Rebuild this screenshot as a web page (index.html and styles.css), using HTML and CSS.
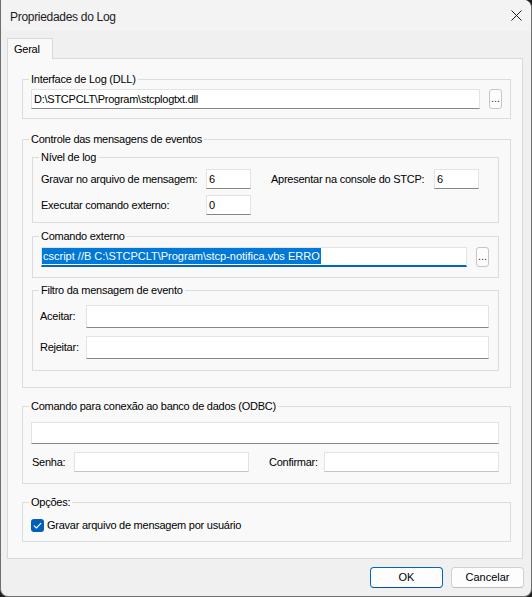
FILE: index.html
```html
<!DOCTYPE html>
<html lang="pt">
<head>
<meta charset="utf-8">
<title>Propriedades do Log</title>
<link rel="stylesheet" href="styles.css">
</head>
<body>
<div class="window">
  <div class="titlebar">
    <span class="title">Propriedades do Log</span>
    <svg class="close" width="11" height="11" viewBox="0 0 11 11"><path d="M0.5 0.5 L10.5 10.5 M10.5 0.5 L0.5 10.5" stroke="#1a1a1a" stroke-width="1" fill="none"/></svg>
  </div>
  <div class="client">
    <div class="tabs"><div class="tab">Geral</div></div>
    <div class="panel">
      <fieldset class="group g-dll">
        <legend>Interface de Log (DLL)</legend>
        <div class="browse-row dll-row">
          <div class="field">D:\STCPCLT\Program\stcplogtxt.dll</div>
          <div class="dots">...</div>
        </div>
      </fieldset>

      <fieldset class="group g-ctrl">
        <legend>Controle das mensagens de eventos</legend>
        <div class="ctrl-body">
          <fieldset class="group g-level">
            <legend>Nível de log</legend>
            <div class="level-grid">
              <span class="lbl">Gravar no arquivo de mensagem:</span>
              <div class="field">6</div>
              <span class="lbl lbl2">Apresentar na console do STCP:</span>
              <div class="field">6</div>
              <span class="lbl">Executar comando externo:</span>
              <div class="field">0</div>
            </div>
          </fieldset>

          <fieldset class="group g-cmd">
            <legend>Comando externo</legend>
            <div class="browse-row cmd-row">
              <div class="field focused"><span class="sel">cscript //B C:\STCPCLT\Program\stcp-notifica.vbs ERRO</span></div>
              <div class="dots">...</div>
            </div>
          </fieldset>

          <fieldset class="group g-filter">
            <legend>Filtro da mensagem de evento</legend>
            <div class="filter-grid">
              <span class="lbl">Aceitar:</span>
              <div class="field tall"></div>
              <span class="lbl">Rejeitar:</span>
              <div class="field tall"></div>
            </div>
          </fieldset>
        </div>
      </fieldset>

      <fieldset class="group g-odbc">
        <legend>Comando para conexão ao banco de dados (ODBC)</legend>
        <div class="odbc-body">
          <div class="field h22"></div>
          <div class="pw-row">
            <span class="lbl senha">Senha:</span>
            <div class="field pw"></div>
            <span class="lbl confirm">Confirmar:</span>
            <div class="field pw"></div>
          </div>
        </div>
      </fieldset>

      <fieldset class="group g-opt">
        <legend>Opções:</legend>
        <div class="check-row">
          <span class="checkbox"><svg width="13" height="13" viewBox="0 0 13 13"><path d="M3.2 6.8 L5.4 9 L9.8 4.4" stroke="#ffffff" stroke-width="1.1" fill="none" stroke-linecap="round" stroke-linejoin="round"/></svg></span>
          <span class="check-label">Gravar arquivo de mensagem por usuário</span>
        </div>
      </fieldset>
    </div>
    <div class="footer">
      <div class="btn default">OK</div>
      <div class="btn">Cancelar</div>
    </div>
  </div>
</div>
</body>
</html>
```

FILE: styles.css
```css
* { box-sizing: border-box; }
html, body { margin: 0; padding: 0; }
body {
  background: #1e1e1e;
  font-family: "Liberation Sans", Arial, sans-serif;
  font-size: 11px;
  color: #000;
  letter-spacing: -0.25px;
}
.window {
  width: 532px;
  height: 597px;
  background: #f0f0f0;
  border: 1px solid #6f6f6f;
  border-top: none;
  border-radius: 0 8px 8px 8px;
  overflow: hidden;
  display: flex;
  flex-direction: column;
}
.titlebar {
  height: 31px;
  flex: none;
  background: #f3f3f3;
  display: flex;
  align-items: center;
  justify-content: space-between;
  padding: 0 9px 0 9px;
}
.title {
  font-size: 12px;
  letter-spacing: -0.3px;
  color: #1b1b1b;
  margin-top: 2px;
}
.close { display: block; }
.client {
  flex: 1;
  padding: 7px 7px 0 6px;
  display: flex;
  flex-direction: column;
}
.tabs { display: flex; height: 20px; flex: none; }
.tab {
  position: relative;
  z-index: 1;
  width: 46px;
  height: 21px;
  background: #f9f9f9;
  border: 1px solid #d9d9d9;
  border-bottom: none;
  padding: 4px 0 0 6px;
  line-height: 13px;
}
.panel {
  height: 501px;
  flex: none;
  margin-right: 1px;
  background: #f9f9f9;
  border: 1px solid #d9d9d9;
  padding: 13px 11px 16px 14px;
  display: flex;
  flex-direction: column;
}
fieldset.group {
  margin: 0;
  padding: 0;
  border: 1px solid #dcdcdc;
  min-width: 0;
}
legend {
  margin-left: 6px;
  padding: 0 2px;
  height: 15px;
  line-height: 15px;
}
.g-ctrl { margin-top: 13px !important; }
.g-odbc { margin-top: 11px !important; }
.g-opt { margin-top: 11px !important; }
.g-cmd { margin-top: 6px !important; }
.g-filter { margin-top: 5px !important; }

.field {
  height: 20px;
  background: #fff;
  border: 1px solid #e3e3e3;
  border-bottom-color: #868686;
  padding: 0 2px;
  line-height: 18px;
  white-space: nowrap;
  overflow: hidden;
}
.field.tall { height: 23px; }
.field.h22 { height: 22px; }
.field.pw { border-bottom-color: #c4c4c4; }
.field.focused {
  border-bottom: 2px solid #0067c0;
  padding: 0;
  line-height: 16px;
}
.sel {
  display: inline-block;
  height: 16px;
  line-height: 16px;
  background: #0078d7;
  color: #fff;
  padding: 0 1px;
  letter-spacing: 0;
  vertical-align: top;
}
.lbl { line-height: 13px; white-space: nowrap; }

.browse-row { display: flex; align-items: flex-start; gap: 9px; }
.browse-row .field { flex: 1; }
.dll-row { padding: 2px 8px 9px 8px; }
.cmd-row { padding: 3px 9px 10px 8px; }
.dots {
  flex: none;
  width: 13px;
  height: 20px;
  border: 1px solid #c6c6c6;
  border-radius: 3px;
  background: #fdfdfd;
  padding-top: 2px;
  text-align: center;
  line-height: 13px;
  letter-spacing: 0;
  color: #4a1c5e;
}

.ctrl-body {
  padding: 3px 11px 16px 9px;
  display: flex;
  flex-direction: column;
}
.level-grid {
  display: grid;
  grid-template-columns: 165px 45px 183px 45px;
  grid-auto-rows: 20px;
  row-gap: 6px;
  align-items: center;
  padding: 4px 0 7px 8px;
}
.lbl2 { padding-left: 20px; }

.filter-grid {
  display: grid;
  grid-template-columns: 46px 1fr;
  grid-auto-rows: 23px;
  row-gap: 8px;
  align-items: center;
  padding: 7px 9px 11px 7px;
}

.odbc-body {
  display: flex;
  flex-direction: column;
  gap: 8px;
  padding: 8px 11px 11px 8px;
}
.pw-row {
  display: grid;
  grid-template-columns: 43px 175px 75px 175px;
  grid-auto-rows: 20px;
  align-items: center;
}
.senha { padding-left: 1px; }
.confirm { padding-left: 20px; }

.check-row {
  display: flex;
  align-items: center;
  gap: 3px;
  height: 31px;
  padding: 9px 8px;
}
.checkbox {
  width: 13px;
  height: 13px;
  border-radius: 3px;
  background: #005fb8;
  display: block;
  flex: none;
}
.checkbox svg { display: block; }
.check-label { line-height: 13px; }

.footer {
  display: flex;
  justify-content: flex-end;
  gap: 8px;
  padding-top: 8px;
}
.btn {
  width: 73px;
  height: 21px;
  border: 1px solid #d0d0d0;
  border-bottom-color: #bdbdbd;
  border-radius: 4px;
  background: #fdfdfd;
  text-align: center;
  line-height: 19px;
  font-size: 11px;
  letter-spacing: 0;
}
.btn.default {
  border-color: #0067c0;
  border-bottom-color: #00539e;
}
```
